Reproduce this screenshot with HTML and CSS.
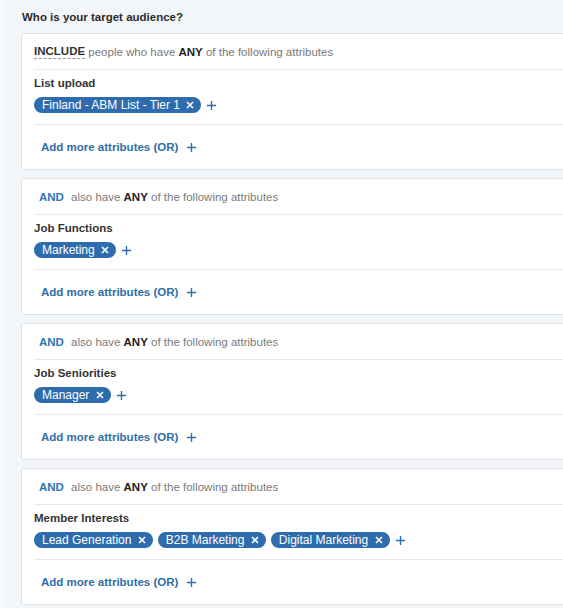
FILE: index.html
```html
<!DOCTYPE html>
<html>
<head>
<meta charset="utf-8">
<link rel="stylesheet" href="styles.css">
</head>
<body>
<div class="page">
  <h2 class="title">Who is your target audience?</h2>

  <div class="card">
    <div class="card-head"><span class="include">INCLUDE</span> people who have <b>ANY</b> of the following attributes</div>
    <div class="group">
      <div class="label">List upload</div>
      <div class="chips">
        <span class="chip">Finland - ABM List - Tier 1 <svg class="x" viewBox="0 0 10 10"><path d="M2 2L8 8M8 2L2 8"/></svg></span>
        <svg class="plus" viewBox="0 0 12 12"><path d="M6 1V11M1 6H11"/></svg>
      </div>
    </div>
    <div class="add">Add more attributes (OR) <svg class="plus" viewBox="0 0 12 12"><path d="M6 1V11M1 6H11"/></svg></div>
  </div>

  <div class="card">
    <div class="card-head"><span class="and">AND</span> also have <b>ANY</b> of the following attributes</div>
    <div class="group">
      <div class="label">Job Functions</div>
      <div class="chips">
        <span class="chip">Marketing <svg class="x" viewBox="0 0 10 10"><path d="M2 2L8 8M8 2L2 8"/></svg></span>
        <svg class="plus" viewBox="0 0 12 12"><path d="M6 1V11M1 6H11"/></svg>
      </div>
    </div>
    <div class="add">Add more attributes (OR) <svg class="plus" viewBox="0 0 12 12"><path d="M6 1V11M1 6H11"/></svg></div>
  </div>

  <div class="card">
    <div class="card-head"><span class="and">AND</span> also have <b>ANY</b> of the following attributes</div>
    <div class="group">
      <div class="label">Job Seniorities</div>
      <div class="chips">
        <span class="chip">Manager <svg class="x" viewBox="0 0 10 10"><path d="M2 2L8 8M8 2L2 8"/></svg></span>
        <svg class="plus" viewBox="0 0 12 12"><path d="M6 1V11M1 6H11"/></svg>
      </div>
    </div>
    <div class="add">Add more attributes (OR) <svg class="plus" viewBox="0 0 12 12"><path d="M6 1V11M1 6H11"/></svg></div>
  </div>

  <div class="card">
    <div class="card-head"><span class="and">AND</span> also have <b>ANY</b> of the following attributes</div>
    <div class="group">
      <div class="label">Member Interests</div>
      <div class="chips">
        <span class="chip">Lead Generation <svg class="x" viewBox="0 0 10 10"><path d="M2 2L8 8M8 2L2 8"/></svg></span>
        <span class="chip">B2B Marketing <svg class="x" viewBox="0 0 10 10"><path d="M2 2L8 8M8 2L2 8"/></svg></span>
        <span class="chip">Digital Marketing <svg class="x" viewBox="0 0 10 10"><path d="M2 2L8 8M8 2L2 8"/></svg></span>
        <svg class="plus" viewBox="0 0 12 12"><path d="M6 1V11M1 6H11"/></svg>
      </div>
    </div>
    <div class="add">Add more attributes (OR) <svg class="plus" viewBox="0 0 12 12"><path d="M6 1V11M1 6H11"/></svg></div>
  </div>
</div>
</body>
</html>
```

FILE: styles.css
```css
html, body {
  margin: 0;
  padding: 0;
  overflow: hidden;
}
body {
  background: #f3f6f8;
  font-family: "Liberation Sans", Arial, sans-serif;
  color: #333;
  border-left: 5px solid #f7f9fb;
}
.page {
  width: 640px;
  padding: 10px 0 0 16px;
}
.title {
  margin: 0 0 9px 1px;
  font-size: 11.5px;
  line-height: 14px;
  font-weight: bold;
  color: #2b2b2b;
}
.card {
  background: #fff;
  border: 1px solid #dfe3e7;
  border-radius: 2px;
  padding-left: 12px;
  margin-bottom: 8px;
}
.card-head {
  height: 35px;
  display: flex;
  align-items: center;
  font-size: 11.5px;
  color: #7a7a7a;
  border-bottom: 1px solid #e6e9ec;
  white-space: pre;
}
.card-head b {
  color: #222;
  font-weight: bold;
}
.include {
  color: #333;
  font-weight: bold;
  border-bottom: 1px dashed #999;
  line-height: 13px;
}
.and {
  color: #2f74b5;
  font-weight: bold;
  padding: 0 4px 0 5px;
}
.group {
  padding: 6px 0 11px;
  border-bottom: 1px solid #e6e9ec;
}
.label {
  font-size: 11.5px;
  line-height: 14px;
  font-weight: bold;
  color: #333;
  margin-bottom: 7px;
}
.chips {
  display: flex;
  align-items: center;
  gap: 5px;
}
.chip {
  display: inline-flex;
  align-items: center;
  height: 16px;
  padding: 0 6px 0 8px;
  border-radius: 8px;
  background: #2e6cae;
  color: #fff;
  font-size: 12px;
  white-space: pre;
}
.chip .x {
  width: 10px;
  height: 10px;
  margin-left: 2px;
  fill: none;
  stroke: #fff;
  stroke-width: 1.6;
}
.plus {
  width: 11px;
  height: 11px;
  fill: none;
  stroke: #2e6cae;
  stroke-width: 1.5;
}
.add {
  height: 44px;
  display: flex;
  align-items: center;
  padding-left: 7px;
  font-size: 11.5px;
  font-weight: bold;
  color: #2f6ea8;
  white-space: pre;
}
.add .plus {
  margin-left: 4px;
  stroke: #2f6ea8;
}
```
